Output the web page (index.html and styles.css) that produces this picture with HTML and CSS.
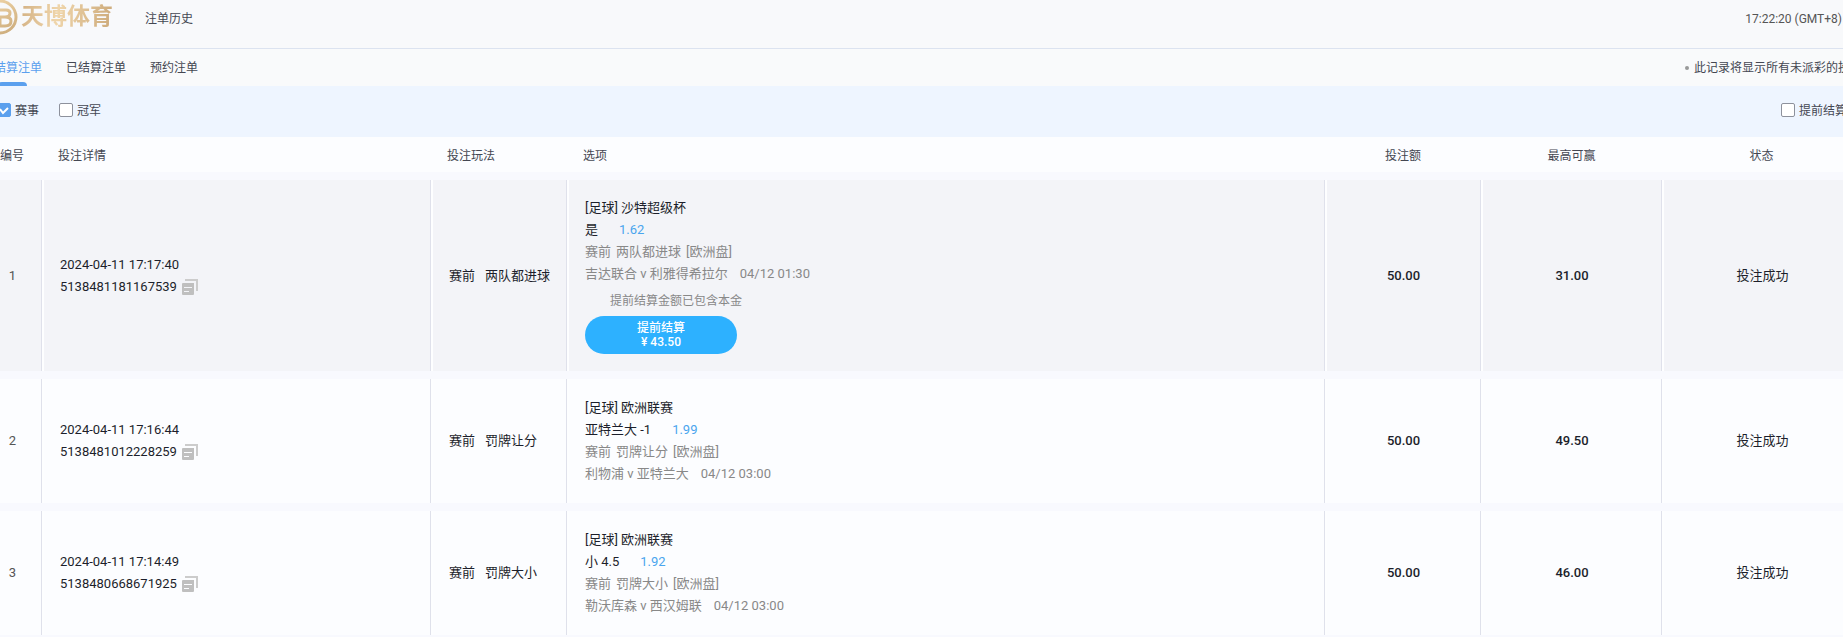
FILE: index.html
```html
<!DOCTYPE html>
<html lang="zh-CN">
<head>
    <meta charset="UTF-8">
    <meta name="viewport" content="width=device-width, initial-scale=1.0">
    <title>注单历史</title>
    <link rel="stylesheet" href="styles.css">
</head>
<body>
    <svg class="sprite" aria-hidden="true">
        <symbol id="icon-copy" viewBox="0 0 16 16">
            <path d="M3 0h13v12h-2V2H3z" fill="#ccc"/>
            <path d="M1 4h11v11a1 1 0 0 1-1 1H1a1 1 0 0 1-1-1V5a1 1 0 0 1 1-1zm1 4v1h8V8zm0 4v1h5v-1z" fill="#bfbfbf" fill-rule="evenodd"/>
        </symbol>
    </svg>
    <div class="page">
        <header class="header">
            <div class="logo">
                <svg class="logo-mark" viewBox="0 0 36 36">
                    <defs>
                        <linearGradient id="gold" gradientUnits="userSpaceOnUse" x1="18" y1="0" x2="36" y2="36">
                            <stop offset="0" stop-color="#ecd0a2"/>
                            <stop offset="1" stop-color="#c9a877"/>
                        </linearGradient>
                    </defs>
                    <circle cx="18" cy="18" r="16" fill="none" stroke="url(#gold)" stroke-width="3"/>
                    <path d="M8 11H24Q28 11 28 14Q28 18 23 18H12M23 18Q29 18 29 22Q29 27 23 27H9M18 18V27" fill="none" stroke="url(#gold)" stroke-width="3"/>
                </svg>
                <span class="logo-text">天博体育</span>
            </div>
            <h1 class="title">注单历史</h1>
            <span class="clock">17:22:20 (GMT+8)</span>
        </header>

        <nav class="tabs">
            <a href="#" class="tab active">未结算注单</a>
            <a href="#" class="tab">已结算注单</a>
            <a href="#" class="tab">预约注单</a>
            <span class="tip">此记录将显示所有未派彩的投注</span>
        </nav>

        <div class="filters">
            <label class="check"><input type="checkbox" checked>赛事</label>
            <label class="check"><input type="checkbox">冠军</label>
            <label class="check check-right"><input type="checkbox">提前结算</label>
        </div>

        <table class="bets">
            <thead>
                <tr>
                    <th class="col-no center">编号</th>
                    <th class="col-detail">投注详情</th>
                    <th class="col-play">投注玩法</th>
                    <th>选项</th>
                    <th class="col-stake center">投注额</th>
                    <th class="col-win center">最高可赢</th>
                    <th class="col-status center">状态</th>
                </tr>
            </thead>
            <tbody>
                <tr class="hover">
                    <td class="no center">1</td>
                    <td>
                        <div>2024-04-11 17:17:40</div>
                        <div class="order">5138481181167539<button class="copy" aria-label="复制"><svg><use href="#icon-copy"/></svg></button></div>
                    </td>
                    <td><span class="phase">赛前</span>两队都进球</td>
                    <td>
                        <div>[足球] 沙特超级杯</div>
                        <div>是<span class="odds">1.62</span></div>
                        <div class="muted"><span class="market">赛前</span><span class="market">两队都进球</span>[欧洲盘]</div>
                        <div class="muted">吉达联合 v 利雅得希拉尔<span class="date">04/12 01:30</span></div>
                        <div class="cashout">
                            <p class="cashout-note">提前结算金额已包含本金</p>
                            <button class="cashout-btn"><span>提前结算</span><span>¥ 43.50</span></button>
                        </div>
                    </td>
                    <td class="amount center">50.00</td>
                    <td class="amount center">31.00</td>
                    <td class="center">投注成功</td>
                </tr>
                <tr>
                    <td class="no center">2</td>
                    <td>
                        <div>2024-04-11 17:16:44</div>
                        <div class="order">5138481012228259<button class="copy" aria-label="复制"><svg><use href="#icon-copy"/></svg></button></div>
                    </td>
                    <td><span class="phase">赛前</span>罚牌让分</td>
                    <td>
                        <div>[足球] 欧洲联赛</div>
                        <div>亚特兰大 -1<span class="odds">1.99</span></div>
                        <div class="muted"><span class="market">赛前</span><span class="market">罚牌让分</span>[欧洲盘]</div>
                        <div class="muted">利物浦 v 亚特兰大<span class="date">04/12 03:00</span></div>
                    </td>
                    <td class="amount center">50.00</td>
                    <td class="amount center">49.50</td>
                    <td class="center">投注成功</td>
                </tr>
                <tr>
                    <td class="no center">3</td>
                    <td>
                        <div>2024-04-11 17:14:49</div>
                        <div class="order">5138480668671925<button class="copy" aria-label="复制"><svg><use href="#icon-copy"/></svg></button></div>
                    </td>
                    <td><span class="phase">赛前</span>罚牌大小</td>
                    <td>
                        <div>[足球] 欧洲联赛</div>
                        <div>小 4.5<span class="odds">1.92</span></div>
                        <div class="muted"><span class="market">赛前</span><span class="market">罚牌大小</span>[欧洲盘]</div>
                        <div class="muted">勒沃库森 v 西汉姆联<span class="date">04/12 03:00</span></div>
                    </td>
                    <td class="amount center">50.00</td>
                    <td class="amount center">46.00</td>
                    <td class="center">投注成功</td>
                </tr>
            </tbody>
        </table>
    </div>
</body>
</html>
```
FILE: styles.css
```css
* {
    box-sizing: border-box;
}
body {
    margin: 0;
    overflow: hidden;
    background-color: #f8f9fe;
    color: #444752;
    font-family: Roboto, "Noto Sans CJK SC", sans-serif;
    font-size: 12px;
}
.sprite {
    display: none;
}
.page {
    margin: 0 -18px;
}
.header {
    display: flex;
    align-items: flex-start;
    height: 49px;
    padding-right: 19px;
    background-color: #f8f9fb;
    border-bottom: 1px solid #dce3f0;
}
.logo {
    display: flex;
    align-items: center;
    gap: 3px;
    height: 34px;
}
.logo-mark {
    width: 36px;
    height: 36px;
}
.logo-text {
    font-size: 23px;
    font-weight: bold;
    line-height: 36px;
    color: transparent;
    background: linear-gradient(100deg, #d3b184, #efd5aa 40%, #cba878);
    -webkit-background-clip: text;
    background-clip: text;
}
.title {
    margin: 0 0 0 32px;
    font-size: 12px;
    font-weight: normal;
    line-height: 38px;
}
.clock {
    margin-left: auto;
    line-height: 38px;
    color: #555;
}
.tabs {
    display: flex;
    gap: 24px;
    height: 37px;
    line-height: 38px;
    background-color: #f9fafb;
}
.tab {
    position: relative;
    color: #444752;
    text-decoration: none;
}
.tab.active {
    color: #5ba0ee;
}
.tab.active::after {
    content: "";
    position: absolute;
    bottom: 0;
    left: 16px;
    width: 29px;
    height: 4px;
    border-radius: 4px 4px 0 0;
    background-color: #5ba0ee;
}
.tip {
    display: flex;
    align-items: center;
    gap: 5px;
    margin-left: auto;
    margin-right: -1px;
    white-space: nowrap;
}
.tip::before {
    content: "";
    width: 4px;
    height: 4px;
    border-radius: 50%;
    background-color: #999;
}
.filters {
    display: flex;
    align-items: center;
    gap: 20px;
    height: 51px;
    padding: 0 14px 4px 15px;
    background-color: #eef5ff;
}
.check {
    display: flex;
    align-items: center;
    gap: 4px;
}
.check input {
    appearance: none;
    width: 14px;
    height: 14px;
    margin: 0;
    border: 1px solid #8d919c;
    border-radius: 2px;
    background-color: #fff;
}
.check input:checked {
    border-color: #5ba0ee;
    background: #5ba0ee url("data:image/svg+xml,%3Csvg xmlns='http://www.w3.org/2000/svg' viewBox='0 0 12 12'%3E%3Cpath d='M2 5l3 4 5-5' fill='none' stroke='white' stroke-width='2'/%3E%3C/svg%3E") center no-repeat;
}
.check-right {
    margin-left: auto;
}
.bets {
    width: 100%;
    table-layout: fixed;
    border-collapse: separate;
    border-spacing: 0 8px;
    margin-top: -8px;
}
.bets th {
    height: 35px;
    padding: 0 0 0 16px;
    background-color: #fcfdff;
    font-weight: normal;
    text-align: left;
}
.bets td {
    height: 124px;
    padding: 17px 0 17px 16px;
    border-left: 2px solid #fdfeff;
    border-right: 1px solid #dfe1eb;
    background-color: #fcfdff;
    font-size: 13px;
    line-height: 22px;
    color: #1c1f2b;
}
.bets td:last-child {
    border-right: none;
}
.bets .hover td {
    background-color: #f3f4f8;
}
.bets .center {
    padding-left: 0;
    padding-right: 0;
    text-align: center;
}
.bets .no {
    color: #555;
}
.bets .amount {
    font-weight: 500;
}
.bets .muted {
    color: #888;
}
.col-no {
    width: 60px;
}
.col-detail {
    width: 389px;
}
.col-play {
    width: 136px;
}
.col-stake {
    width: 156px;
}
.col-win {
    width: 181px;
}
.col-status {
    width: 199px;
}
.order {
    display: flex;
    align-items: center;
}
.copy {
    width: 16px;
    height: 16px;
    margin-left: 5px;
    padding: 0;
    border: none;
    background: none;
    cursor: pointer;
}
.copy svg {
    display: block;
    width: 16px;
    height: 16px;
}
.phase {
    margin-right: 10px;
}
.market {
    margin-right: 5px;
}
.odds {
    margin-left: 21px;
    color: #4aa5ee;
}
.date {
    margin-left: 12px;
}
.cashout {
    width: 152px;
    padding-top: 5px;
}
.cashout-note {
    margin: 0 0 4px;
    padding-left: 25px;
    font-size: 12px;
    color: #888;
    white-space: nowrap;
}
.cashout-btn {
    display: flex;
    flex-direction: column;
    align-items: center;
    justify-content: center;
    width: 100%;
    height: 38px;
    border: none;
    border-radius: 19px;
    background-color: #2db1ff;
    color: #fff;
    font-family: inherit;
    font-size: 12px;
    font-weight: 500;
    line-height: 14px;
    cursor: pointer;
}
```
